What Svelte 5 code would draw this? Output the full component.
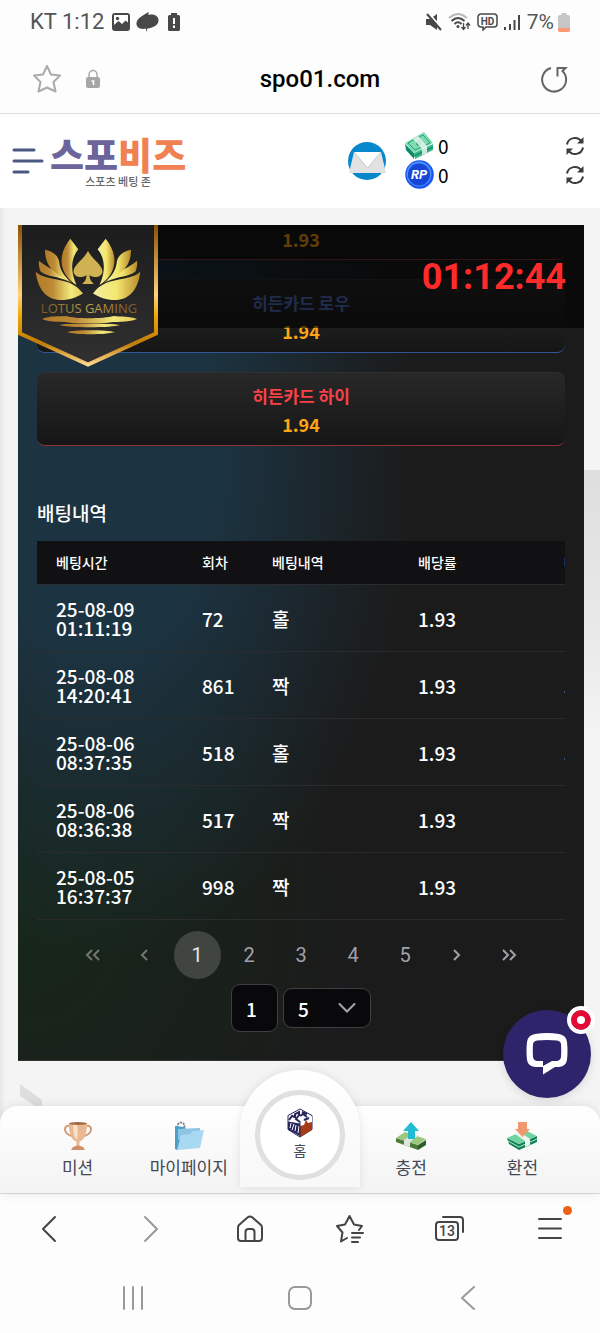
<script lang="ts">
	type Bet = { date: string; time: string; round: number; pick: string; odds: string; amount: string };

	const bets: Bet[] = [
		{ date: '25-08-09', time: '01:11:19', round: 72, pick: '홀', odds: '1.93', amount: '10,000' },
		{ date: '25-08-08', time: '14:20:41', round: 861, pick: '짝', odds: '1.93', amount: '30,000' },
		{ date: '25-08-06', time: '08:37:35', round: 518, pick: '홀', odds: '1.93', amount: '30,000' },
		{ date: '25-08-06', time: '08:36:38', round: 517, pick: '짝', odds: '1.93', amount: '10,000' },
		{ date: '25-08-05', time: '16:37:37', round: 998, pick: '짝', odds: '1.93', amount: '10,000' }
	];
	const pages = [1, 2, 3, 4, 5];

	let page = $state(1);
	let perPage = $state(5);
</script>

{#snippet refresh()}
	<svg width="20" height="20" viewBox="0 0 20 20" fill="none" stroke="#3c3c3c" stroke-width="2">
		<path d="M2 8.5A8 8 0 0 1 16.5 5.5M18 11.5A8 8 0 0 1 3.500 14.500" />
		<path d="M18.500 1v6.500h-6.500zM1.500 19v-6.500h6.500z" fill="#3c3c3c" stroke="none" />
	</svg>
{/snippet}

{#snippet chevron(d: string)}
	<svg width="18" height="14" viewBox="0 0 18 14" fill="none" stroke="currentColor" stroke-width="2">
		<path {d} />
	</svg>
{/snippet}

{#snippet petals()}
	<path d="M17.700 46.700C30 58 52 50 65 68.500C50 78 22 82 17.700 46.700z" />
	<path d="M21 35.700C30 44 42 46 51 56.500C40 51 29 52 22.500 46.500C21 43 20.500 39 21 35.700z" />
	<path d="M27 24.700C37 27 41 32 41.500 39C42.500 46 47 52 54 58C42 50 27 46 27 24.700z" />
	<path d="M52.300 13.700L60.300 24.300C53 33 52 46 58.500 60C45 52 36 34 52.300 13.700z" />
{/snippet}

<div class="phone">
	<div class="status">
		<span class="clock-text">KT 1:12</span>
		<svg width="18" height="18" viewBox="0 0 18 18">
			<rect width="18" height="18" rx="3" fill="#484848" />
			<path d="M2 2h14v7.500l-2.500-2-3.500 3.500-3.500-3L2 12z" fill="#fff" />
			<circle cx="5.500" cy="5.500" r="1.700" fill="#484848" />
			<path d="M2 16v-3.500L6.500 9l3 3.500 4-4L16 11v5z" fill="#484848" />
		</svg>
		<svg width="23" height="20" viewBox="0 0 23 20" fill="#484848">
			<path d="M12.500 0v3C18 1.500 23 4 22.500 9c-.5 4.500-6 7-11 7.500L10 20v-3.500C4 18 0 15 .5 11 1 6 7 3.500 12.500 0z" />
		</svg>
		<svg class="battery-low" width="14" height="18" viewBox="0 0 14 18">
			<path d="M4 0h6v2h1.500A1.500 1.500 0 0 1 13 3.500v13a1.500 1.500 0 0 1-1.500 1.500h-9A1.500 1.500 0 0 1 1 16.500v-13A1.500 1.500 0 0 1 2.500 2H4z" fill="#484848" />
			<path d="M7 5v6M7 12.500v2.500" stroke="#fff" stroke-width="2" />
		</svg>
		<svg class="mute" width="17" height="18" viewBox="0 0 17 18">
			<path d="M1 6h4L12 1v16L5 12H1z" fill="#484848" />
			<path d="M3 0l14 15" stroke="#fff" stroke-width="2" />
			<path d="M2 1l14 16" stroke="#484848" stroke-width="2" />
		</svg>
		<svg width="23" height="18" viewBox="0 0 23 18" fill="none">
			<path d="M1 5Q10-3 19 5" stroke="#b9b9b9" stroke-width="2" />
			<path d="M3.500 8Q10 2 16.500 8M6.500 11Q10 7.500 13.500 11" stroke="#484848" stroke-width="2" />
			<circle cx="10" cy="13.500" r="1.500" fill="#484848" />
			<path d="M15.500 10v7M13.500 14l2 2.500 2-2.500M20 16v-6M18 12.500l2-2.500 2 2.500" stroke="#484848" stroke-width="1.300" />
		</svg>
		<svg width="21" height="18" viewBox="0 0 21 18">
			<path d="M4 1h13a3 3 0 0 1 3 3v7a3 3 0 0 1-3 3H9l-3 3v-3H4a3 3 0 0 1-3-3V4a3 3 0 0 1 3-3z" fill="none" stroke="#484848" stroke-width="1.500" />
			<text x="10.500" y="11.500" class="hd" text-anchor="middle">HD</text>
		</svg>
		<svg width="17" height="18" viewBox="0 0 17 18" stroke="#484848" stroke-width="2">
			<path d="M1 14v3M6 11v6M10.500 7v10M15 2v15" />
		</svg>
		<span class="battery">
			7%
			<svg width="12" height="19" viewBox="0 0 12 19">
				<path d="M3.500 0h5v2H10a2 2 0 0 1 2 2v13a2 2 0 0 1-2 2H2a2 2 0 0 1-2-2V4a2 2 0 0 1 2-2h1.500z" fill="#c6c6c6" />
				<path d="M0 15h12v2a2 2 0 0 1-2 2H2a2 2 0 0 1-2-2z" fill="#ff9875" />
			</svg>
		</span>
	</div>

	<div class="address">
		<button type="button" aria-label="북마크">
			<svg width="30" height="30" viewBox="0 0 30 30" fill="none" stroke="#aaa" stroke-width="2" stroke-linejoin="round">
				<path d="M15 2l4 8.500 9 1-6.500 6.500 2 9.500L15 23.500 6.500 27.500l2-9.500L2 11.500l9-1z" />
			</svg>
		</button>
		<svg width="14" height="20" viewBox="0 0 14 20">
			<path d="M3 9V5.500a4 4 0 0 1 8 0V9" fill="none" stroke="#aaa" stroke-width="1.500" />
			<rect y="8" width="14" height="11" rx="2" fill="#a6a6a6" />
			<path d="M5.500 12h2v4" stroke="#fff" stroke-width="1.500" fill="none" />
		</svg>
		<span class="url">spo01.com</span>
		<button type="button" aria-label="새로고침">
			<svg width="28" height="28" viewBox="0 0 28 28" fill="none" stroke="#666" stroke-width="2">
				<path d="M11 3A12 12 0 1 0 22.500 6L25.500 3H17.500V11.500" />
			</svg>
		</button>
	</div>

	<div class="site">
		<header>
			<button type="button" class="menu" aria-label="메뉴">
				<svg width="32" height="26" viewBox="0 0 32 26" stroke="#4a5982" stroke-width="3" stroke-linecap="round">
					<path d="M2 2h20M2 13h28M2 24h14" />
				</svg>
			</button>
			<a class="logo" href="#home">
				<strong>스포<em>비즈</em></strong>
				<small>스포츠 베팅 존</small>
			</a>
			<button type="button" class="mail" aria-label="쪽지">
				<svg width="40" height="38" viewBox="0 0 40 38">
					<circle cx="20" cy="19" r="19" fill="#0788cd" />
					<path d="M7 10h27l5 21H2z" fill="#e2e2e2" />
					<path d="M7 10h27L20.500 26z" fill="#fff" />
					<path d="M7 10l13.500 16L34 10" fill="none" stroke="#c9c9c9" />
				</svg>
			</button>
			<ul class="balances">
				<li>
					<svg width="29" height="28" viewBox="0 0 29 28">
						<path d="M0 12l9 9v6L1 18z" fill="#0c8a6a" />
						<path d="M9 21L28 12v6L10 27z" fill="#39b58b" />
						<path d="M9 24l19-9" stroke="#0b7a5e" />
						<path d="M0 11L19 0l9 11L9 21z" fill="#7fdcb2" />
						<path d="M3 11l15-8 7 8-15 7z" fill="none" stroke="#2c9d77" />
						<circle cx="14" cy="11" r="3" fill="#2c9d77" />
						<path d="M8 7l5-3 9 10v7l-5 2v-6z" fill="#e7f5ef" opacity=".85" />
					</svg>
					<span>0</span>
					<button type="button" aria-label="보유머니 갱신">{@render refresh()}</button>
				</li>
				<li>
					<svg width="29" height="29" viewBox="0 0 29 29">
						<circle cx="14.500" cy="14.500" r="14.300" fill="#1b55f2" />
						<circle cx="14" cy="14" r="12.500" fill="#4a90ff" />
						<circle cx="14" cy="14.500" r="11" fill="#1646d8" />
						<text x="14" y="19" class="rp" text-anchor="middle">RP</text>
					</svg>
					<span>0</span>
					<button type="button" aria-label="포인트 갱신">{@render refresh()}</button>
				</li>
			</ul>
		</header>

		<main>
			<section class="panel">
				<div class="topbar"><time>01:12:44</time></div>
				<svg class="shield" width="140" height="143" viewBox="0 0 140 143">
					<defs>
						<linearGradient id="rim" x1="0" y1="0" x2="0" y2="1">
							<stop offset="0" stop-color="#8a5200" />
							<stop offset=".5" stop-color="#ffd27a" />
							<stop offset=".66" stop-color="#f0a400" />
							<stop offset=".85" stop-color="#c07c08" />
							<stop offset="1" stop-color="#ffd68c" />
						</linearGradient>
						<linearGradient id="gold">
							<stop offset="0" stop-color="#b27a28" />
							<stop offset=".35" stop-color="#bd8a35" />
							<stop offset=".75" stop-color="#f3ea7c" />
							<stop offset="1" stop-color="#e5c95c" />
						</linearGradient>
						<linearGradient id="gold-right">
							<stop offset="0" stop-color="#b88a28" />
							<stop offset=".5" stop-color="#f3e76f" />
							<stop offset="1" stop-color="#f4eda0" />
						</linearGradient>
						<linearGradient id="letters">
							<stop offset="0" stop-color="#7d5520" />
							<stop offset=".5" stop-color="#c2a452" />
							<stop offset="1" stop-color="#7d5520" />
						</linearGradient>
						<linearGradient id="felt" x1="0" y1="0" x2="0" y2="1">
							<stop offset="0" stop-color="#1c1c1c" />
							<stop offset="1" stop-color="#303030" />
						</linearGradient>
					</defs>
					<path d="M2 0V108.500L70 139.500L138 108.500V0" fill="url(#felt)" stroke="url(#rim)" stroke-width="4" />
					<g fill="url(#gold)">{@render petals()}</g>
					<g fill="url(#gold-right)" transform="translate(140) scale(-1 1)">{@render petals()}</g>
					<path d="M70 26C74 34 84.500 40 84.500 46.500C84.500 52 76 54 71.500 50C71.500 54 73 57 76 59H64C67 57 68.500 54 68.500 50C64 54 55.500 52 55.500 46.500C55.500 40 66 34 70 26z" fill="#d0b252" />
					<text x="71" y="88" class="lotus" text-anchor="middle" fill="url(#letters)">LOTUS GAMING</text>
					<g fill="url(#gold)">
						<path d="M24 94C34 90 44 92 48 91C58 94 84 94 96 91C102 92 112 91 119 94C110 98 96 96 88 98H54C46 96 32 98 24 94z" />
						<path d="M41 100C50 98 90 98 102 100C94 103 50 103 41 100z" />
						<path d="M49 107C56 104.500 88 104.500 97 107C88 110 56 110 49 107z" />
					</g>
				</svg>

				<div class="cards">
					<div class="card red cut"><b>1.93</b></div>
					<button type="button" class="card blue"><span>히든카드 로우</span><b>1.94</b></button>
					<button type="button" class="card red"><span>히든카드 하이</span><b>1.94</b></button>
				</div>

				<h2>배팅내역</h2>
				<div class="table-wrap">
					<table>
						<colgroup>
							<col class="wide" /><col class="narrow" /><col class="wide" /><col class="wide" /><col class="wide" />
						</colgroup>
						<thead>
							<tr><th>베팅시간</th><th>회차</th><th>베팅내역</th><th>배당률</th><th>배팅금액</th></tr>
						</thead>
						<tbody>
							{#each bets as bet}
								<tr>
									<td>{bet.date}<br />{bet.time}</td>
									<td>{bet.round}</td>
									<td>{bet.pick}</td>
									<td>{bet.odds}</td>
									<td>{bet.amount}</td>
								</tr>
							{/each}
						</tbody>
					</table>
				</div>

				<nav class="pager" aria-label="페이지">
					<button type="button" class="dim" aria-label="처음" onclick={() => (page = 1)}>{@render chevron('M8 2L3 7l5 5M15 2l-5 5 5 5')}</button>
					<button type="button" class="dim" aria-label="이전" onclick={() => (page = Math.max(1, page - 1))}>{@render chevron('M11 2L6 7l5 5')}</button>
					{#each pages as n}
						<button type="button" class:active={page === n} onclick={() => (page = n)}>{n}</button>
					{/each}
					<button type="button" aria-label="다음" onclick={() => (page = Math.min(5, page + 1))}>{@render chevron('M6 2l5 5-5 5')}</button>
					<button type="button" aria-label="마지막" onclick={() => (page = 5)}>{@render chevron('M3 2l5 5-5 5M10 2l5 5-5 5')}</button>
				</nav>
				<div class="jump">
					<input type="text" aria-label="페이지 이동" bind:value={page} />
					<div class="select">
						<select aria-label="페이지당 행" bind:value={perPage}>
							<option value={5}>5</option>
							<option value={10}>10</option>
						</select>
						<svg width="18" height="10" viewBox="0 0 18 10" fill="none" stroke="#a5a5aa" stroke-width="2" stroke-linecap="round">
							<path d="M1.500 1L9 8.500 16.500 1" />
						</svg>
					</div>
				</div>
			</section>
			<svg class="scrap" width="26" height="24" viewBox="0 0 26 24" fill="#dedede">
				<path d="M2 2l22 16v6H17L2 14z" />
			</svg>
		</main>

		<nav class="tabs">
			<a href="#mission">
				<svg width="30" height="30" viewBox="0 0 30 30">
					<path d="M7 5C0 3 0 13 9 15M23 5c7-2 7 8-2 10" fill="none" stroke="#d49a72" stroke-width="2" />
					<path d="M6 2h18c0 10-2 17-7.500 18.500v4.500h-3v-4.500C8 19 6 12 6 2z" fill="#e9b791" />
					<path d="M10 3c0 8 1 13 4 16 1-5 1-11 0-16z" fill="#fbe0c8" />
					<ellipse cx="15" cy="2.500" rx="9" ry="1.500" fill="#a4673f" />
					<path d="M10 26q5-3 10 0l2 3H8z" fill="#cf9068" />
				</svg>
				미션
			</a>
			<a href="#mypage">
				<svg width="30" height="30" viewBox="0 0 30 30">
					<circle cx="7" cy="5" r="3.500" fill="none" stroke="#777f88" stroke-width="2" stroke-dasharray="2 1" />
					<path d="M1 5l9 1 2 2h14v6L3 29l-2-1z" fill="#4d9fcb" />
					<path d="M4 8l22-1v12H4z" fill="#8cc4e4" />
					<path d="M7 14l9-1 2-3 12-1-4 18L3 29z" fill="#a9d8f2" />
				</svg>
				마이페이지
			</a>
			<a href="#home" class="home">
				<span class="ring">
					<svg width="26" height="30" viewBox="0 0 26 30">
						<path d="M13 1l12 6.500v14L13 29 1 21.500v-14z" fill="#fff" stroke="#27265c" />
						<path d="M13 14l12-6v14L13 29z" fill="#a63c16" />
						<path d="M13 14l12-6v6l-4 1-2-3-2 5-4 1z" fill="#fff" />
						<path d="M1 13.500l12 2V28L1 21.500z" fill="#27265c" />
						<path d="M4 15l-1 5M7 16l-2 6M9 17l-1 6M12 18l-1 7" stroke="#fff" />
						<path d="M2 12l3-4 3 1v-3l4-2v3l-3 4 4 3M15 4l5 2M13 8l3-2 4 3M17 12l5-2" stroke="#27265c" stroke-width="2" fill="none" />
						<path d="M13 14v15" stroke="#27265c" />
					</svg>
					홈
				</span>
			</a>
			<a href="#deposit">
				<svg width="30" height="30" viewBox="0 0 30 30">
					<path d="M0 17l22 7v5L0 21z" fill="#4a7b39" />
					<path d="M22 24l8-5v5l-8 5z" fill="#2e5d2a" />
					<path d="M0 17l9-6 21 7-8 6z" fill="#9bc77f" />
					<path d="M8 19l9-6 5 2-8 6v5l-6-2z" fill="#dfe6dd" />
					<path d="M15 1l8 9h-4v8h-7v-8H7z" fill="#1fbcd2" />
				</svg>
				충전
			</a>
			<a href="#withdraw">
				<svg width="30" height="30" viewBox="0 0 30 30">
					<path d="M0 17l12 6 18-8v6l-18 8-10-6z" fill="#158058" />
					<path d="M1 20l11 6 18-8" fill="none" stroke="#a8ecca" />
					<path d="M0 17l18-8 12 6-18 8z" fill="#6fd3a2" />
					<path d="M8 13l5-2 10 7v6l-5 2v-6z" fill="#eef4f0" />
					<path d="M11 1h9v7h3l-7.500 8L8 8h3z" fill="#f09870" />
				</svg>
				환전
			</a>
		</nav>

		<button type="button" class="chat" aria-label="상담">
			<svg width="42" height="42" viewBox="0 0 42 42">
				<path d="M9 1Q21-1 33 1Q40 2 41 9Q42 18 41 27Q40 33 33 34H29L17 41.500V34H9Q2 33 1 27Q0 18 1 9Q2 2 9 1z" fill="#fff" />
				<path d="M11 7.500Q21 6.500 31 7.500Q34.500 8 35 11Q35.500 18 35 24Q34.500 27.500 31 28H26L17 33V28H11Q7.500 27.500 7 24Q6.500 18 7 11Q7.500 8 11 7.500z" fill="#2d246b" />
			</svg>
			<span class="alert"></span>
		</button>
	</div>

	<nav class="browser">
		<button type="button" aria-label="뒤로">
			<svg width="30" height="30" viewBox="0 0 30 30"><path d="M20 3L8 15l12 12" /></svg>
		</button>
		<button type="button" class="faded" aria-label="앞으로">
			<svg width="30" height="30" viewBox="0 0 30 30"><path d="M10 3l12 12-12 12" /></svg>
		</button>
		<button type="button" aria-label="홈">
			<svg width="30" height="30" viewBox="0 0 30 30"><path d="M4 11l8.500-7.500q2.500-2 5 0L26 11q1 1 1 3v10q0 3-3 3H6q-3 0-3-3V14q0-2 1-3zM10.500 27v-9q0-3 3-3h3q3 0 3 3v9" /></svg>
		</button>
		<button type="button" aria-label="북마크 목록">
			<svg width="30" height="30" viewBox="0 0 30 30"><path d="M12 24l-6 3.500 1.500-9L2 12l8-1.500L14.500 2 19 10.500l8 1.500-3 4M17 19h11M17 23.500h8M17 28h6" /></svg>
		</button>
		<button type="button" aria-label="탭 13개">
			<svg width="30" height="30" viewBox="0 0 30 30">
				<path d="M4 8h16q3 0 3 3v12q0 3-3 3H4q-3 0-3-3V11q0-3 3-3zM8 3h17q3 0 3 3v12" />
				<text x="12" y="22" class="count" text-anchor="middle">13</text>
			</svg>
		</button>
		<button type="button" class="more" aria-label="더보기">
			<svg width="30" height="30" viewBox="0 0 30 30"><path d="M4 5h22M4 14.500h22M4 24h22" /></svg>
			<span class="dot"></span>
		</button>
	</nav>

	<nav class="system">
		<button type="button" aria-label="최근 앱">
			<svg width="26" height="26" viewBox="0 0 26 26"><path d="M4 2v22M13 2v22M22 2v22" /></svg>
		</button>
		<button type="button" aria-label="홈 화면">
			<svg width="26" height="26" viewBox="0 0 26 26"><rect x="2" y="2" width="22" height="22" rx="6" /></svg>
		</button>
		<button type="button" aria-label="이전 화면">
			<svg width="26" height="26" viewBox="0 0 26 26"><path d="M20 2L8 13l12 11" /></svg>
		</button>
	</nav>
</div>

<style>
	:global(body) {
		margin: 0;
		background: #fdfdfd;
	}

	.phone {
		font-family: 'Noto Sans CJK KR', sans-serif;
		color: #222;
	}

	.phone :global(svg) {
		display: block;
		flex: none;
	}

	button {
		padding: 0;
		border: 0;
		background: none;
		font: inherit;
		color: inherit;
		cursor: pointer;
	}

	a {
		color: inherit;
		text-decoration: none;
	}

	/* phone status row */
	.status {
		display: flex;
		align-items: center;
		gap: 6px;
		height: 44px;
		padding: 0 30px;
		font: 21px/24px Roboto, sans-serif;
		color: #555;
	}

	.clock-text {
		margin-right: 2px;
		font-size: 22px;
	}

	.battery-low {
		margin-left: 2px;
	}

	.mute {
		margin-left: auto;
	}

	.hd {
		font: 700 10px Roboto, sans-serif;
		fill: #484848;
	}

	.battery {
		display: flex;
		align-items: center;
		gap: 4px;
	}

	.address {
		display: flex;
		align-items: center;
		height: 69px;
		padding: 0 32px;
		border-bottom: 1px solid #dedede;
	}

	.address > svg {
		margin-left: 24px;
	}

	.url {
		flex: 1;
		text-align: center;
		font: 500 24px/28px Roboto, sans-serif;
		color: #000;
	}

	/* site */
	.site {
		position: relative;
		border-bottom: 1px solid #ddd;
		background: #f4f4f4;
		box-shadow: inset 4px 0 4px -2px #e4e4e4;
	}

	header {
		display: flex;
		align-items: center;
		height: 94px;
		padding: 0 15px 0 12px;
		background: #fff;
	}

	.logo {
		display: flex;
		flex-direction: column;
		align-items: center;
		margin-left: 6px;
	}

	.logo strong {
		font-size: 37px;
		font-weight: 900;
		line-height: 40px;
		color: #6b659b;
	}

	.logo em {
		font-style: normal;
		color: #f08152;
	}

	.logo small {
		font-size: 11px;
		font-weight: 500;
		line-height: 14px;
		color: #666;
	}

	.mail {
		margin-left: auto;
	}

	.balances {
		display: grid;
		width: 180px;
		margin: 0 0 2px 18px;
		padding: 0;
		list-style: none;
	}

	.balances li {
		display: flex;
		align-items: center;
		gap: 4px;
		height: 29px;
		font-size: 19px;
		line-height: 28px;
		color: #000;
	}

	.balances button {
		margin-left: auto;
	}

	.rp {
		font: italic 700 13px Roboto, sans-serif;
		fill: #fff;
	}

	main {
		padding: 17px 16px 0 18px;
		background: linear-gradient(#dedede, #e9e9e9 60%, #f4f4f4) right 262px / 16px 270px no-repeat;
	}

	.panel {
		position: relative;
		overflow: hidden;
		padding: 0 19px 28px;
		border-bottom: 1px solid #333;
		background:
			radial-gradient(ellipse 56% 60% at 14% 28%, #1c3442 0, #1c3442 36%, transparent),
			radial-gradient(ellipse 62% 46% at 0 82%, #17271a, transparent),
			#1b1b1b;
		color: #fff;
	}

	.topbar {
		position: absolute;
		inset: 0 0 auto;
		z-index: 1;
		display: flex;
		justify-content: flex-end;
		align-items: center;
		box-sizing: border-box;
		height: 103px;
		padding-right: 18px;
		background: rgb(0 0 0 / 0.62);
	}

	time {
		font: 700 36px/50px Roboto, sans-serif;
		color: #ff2a2a;
	}

	.shield {
		position: absolute;
		top: 0;
		left: 0;
		z-index: 2;
	}

	.lotus {
		font: 13px 'Open Sans', sans-serif;
	}

	.cards {
		display: grid;
		gap: 19px;
	}

	.card {
		display: grid;
		box-sizing: border-box;
		padding: 9px 0 7px;
		border-radius: 8px;
		border: solid #303030;
		border-width: 1px 0;
		background: linear-gradient(#282828, #161616);
		font-size: 17px;
		line-height: 28px;
		font-weight: 700;
		text-align: center;
	}

	.card b {
		font-size: 18px;
		font-weight: 700;
		color: #ffa416;
	}

	.card.blue {
		border-bottom-color: #34549a;
		color: #5673c9;
	}

	.card.red {
		border-bottom-color: #8c3439;
		color: #fb4148;
	}

	.card.cut {
		padding: 0 0 6px;
		border-top: 0;
		border-radius: 0 0 8px 8px;
		background: #1a1a1a;
	}

	h2 {
		margin: 53px 0 14px;
		font-size: 19px;
		font-weight: 500;
		line-height: 28px;
	}

	.table-wrap {
		overflow: hidden;
	}

	table {
		width: 654px;
		table-layout: fixed;
		border-collapse: collapse;
		text-align: left;
	}

	.wide {
		width: 146px;
	}

	.narrow {
		width: 70px;
	}

	tr {
		border-bottom: 1px solid #2b2b2d;
	}

	th {
		padding: 12px 0 12px 19px;
		background: #111113;
		font-size: 14px;
		font-weight: 500;
		line-height: 19px;
	}

	td {
		padding: 14px 0 14px 19px;
		font-size: 19px;
		font-weight: 500;
		line-height: 19px;
	}

	.pager,
	.jump {
		display: flex;
		justify-content: center;
		align-items: center;
		gap: 5px;
	}

	.pager {
		margin: 11px 0 5px;
		color: #a1a1aa;
		font: 20px/24px Roboto, sans-serif;
	}

	.pager button {
		display: grid;
		place-items: center;
		width: 47px;
		height: 48px;
		border-radius: 50%;
	}

	.pager .dim {
		color: #73766f;
	}

	.pager .active {
		background: #414540;
		color: #e4e4e7;
	}

	.jump {
		font-size: 19px;
		font-weight: 500;
	}

	input,
	select {
		box-sizing: border-box;
		margin: 0;
		border: 1px solid #3f3f46;
		border-radius: 9px;
		background: #09090b;
		color: #fff;
		font: inherit;
	}

	input {
		width: 47px;
		height: 48px;
		padding: 0 14px;
	}

	.select {
		display: grid;
		align-items: center;
	}

	.select > * {
		grid-area: 1 / 1;
	}

	.select svg {
		justify-self: end;
		margin-right: 15px;
		pointer-events: none;
	}

	select {
		appearance: none;
		width: 88px;
		height: 40px;
		padding: 0 14px;
	}

	.scrap {
		margin-top: 21px;
	}

	/* bottom tabs */
	.tabs {
		position: relative;
		display: grid;
		grid-template-columns: repeat(5, minmax(0, 1fr));
		padding: 0 22px;
		border-radius: 18px 18px 0 0;
		background: linear-gradient(#fff, #f3f3f4);
		box-shadow: 0 0 12px rgb(0 0 0 / 0.1);
		font-size: 17px;
		line-height: 24px;
		color: #444853;
	}

	.tabs > a {
		display: flex;
		flex-direction: column;
		align-items: center;
		gap: 4px;
		height: 72px;
		padding-top: 15px;
	}

	.tabs > .home {
		justify-self: center;
		justify-content: center;
		box-sizing: border-box;
		width: 120px;
		height: 117px;
		margin-top: -36px;
		padding: 12px 0 0;
		border-radius: 60px 60px 0 0;
		background: linear-gradient(#fff, #f8f8f8);
		box-shadow: 0 0 10px rgb(0 0 0 / 0.1);
	}

	.ring {
		display: flex;
		flex-direction: column;
		align-items: center;
		justify-content: center;
		width: 80px;
		height: 80px;
		border: 5px solid #e0e0e0;
		border-radius: 50%;
		background: #fff;
		font-size: 14px;
	}

	.chat {
		position: absolute;
		right: 9px;
		bottom: 95px;
		display: grid;
		place-items: center;
		width: 88px;
		height: 88px;
		border-radius: 50%;
		background: #2d246b;
		box-shadow: 0 2px 10px rgb(0 0 0 / 0.12);
	}

	.alert {
		position: absolute;
		top: 0;
		right: 0;
		width: 8px;
		height: 8px;
		border: 6px solid #e50a35;
		border-radius: 50%;
		background: #fff;
		outline: 4px solid #fff;
	}

	.browser,
	.system {
		display: grid;
		grid-template-columns: repeat(6, 1fr);
		height: 69px;
		fill: none;
		stroke: #444;
		stroke-width: 2;
		stroke-linecap: round;
		stroke-linejoin: round;
	}

	.browser button,
	.system button {
		position: relative;
		display: grid;
		place-items: center;
	}

	.browser .faded {
		stroke: #999;
	}

	.count {
		font: 500 14px Roboto, sans-serif;
		fill: #444;
		stroke: none;
	}

	.dot {
		position: absolute;
		top: 12px;
		right: 28px;
		width: 9px;
		height: 9px;
		border-radius: 50%;
		background: #ee6115;
	}

	.system {
		grid-template-columns: repeat(3, 1fr);
		padding: 0 49px;
		stroke: #999;
	}
</style>
